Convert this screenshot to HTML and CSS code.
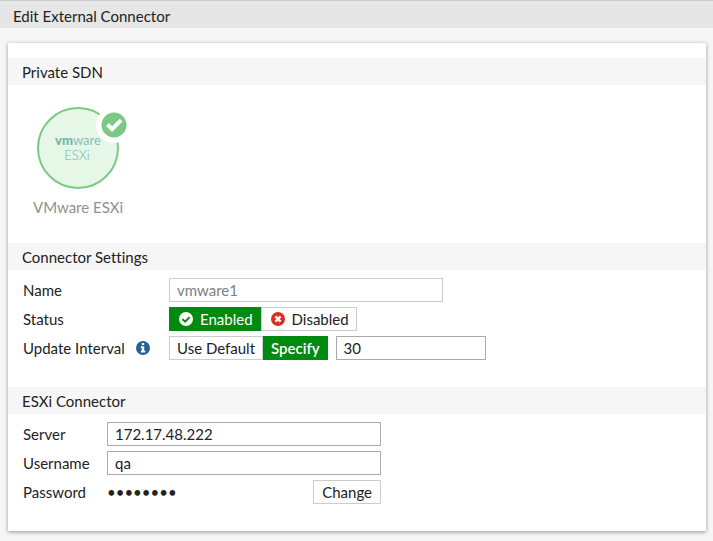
FILE: index.html
```html
<!DOCTYPE html>
<html lang="en">
<head>
  <meta charset="utf-8">
  <meta name="viewport" content="width=device-width, initial-scale=1">
  <title>Edit External Connector</title>
  <link rel="stylesheet" href="styles.css">
</head>
<body>
  <header class="page-header">
    <h1>Edit External Connector</h1>
  </header>
  <main class="card">
    <section>
      <h2 class="section-title">Private SDN</h2>
      <div class="sdn">
        <figure class="connector">
          <div class="disc">
            <svg viewBox="0 0 82 82" aria-hidden="true">
              <circle cx="41" cy="41" r="40" fill="#e6f6e7" stroke="#7cc984" stroke-width="2"/>
              <text class="logo-name" x="41" y="38" text-anchor="middle"><tspan class="logo-bold">vm</tspan>ware</text>
              <text class="logo-product" x="40" y="53" text-anchor="middle">ESXi</text>
            </svg>
            <svg class="badge" viewBox="0 0 36 36" aria-hidden="true">
              <circle cx="18" cy="18" r="18" fill="#fff"/>
              <circle cx="18" cy="18" r="12.5" fill="#7cc984"/>
              <path d="M11.5 17.5l4.6 4.6 9-9" fill="none" stroke="#fff" stroke-width="4"/>
            </svg>
          </div>
          <figcaption>VMware ESXi</figcaption>
        </figure>
      </div>
    </section>

    <section>
      <h2 class="section-title">Connector Settings</h2>
      <form class="fields fields-wide">
        <label for="name">Name</label>
        <input class="text-box" id="name" type="text" value="vmware1" disabled>

        <span id="status-label">Status</span>
        <div class="toggle" role="group" aria-labelledby="status-label">
          <button class="btn active" type="button" aria-pressed="true">
            <svg class="icon" viewBox="0 0 14 14" aria-hidden="true">
              <circle cx="7" cy="7" r="7" fill="#fff"/>
              <path d="M3.5 7.1l2.6 2.6 4.5-4.6" fill="none" stroke="#008a10" stroke-width="2"/>
            </svg>
            Enabled
          </button>
          <button class="btn" type="button" aria-pressed="false">
            <svg class="icon" viewBox="0 0 14 14" aria-hidden="true">
              <circle cx="7" cy="7" r="7" fill="#de2a20"/>
              <path d="M4.4 4.4l5.2 5.2M9.6 4.4l-5.2 5.2" fill="none" stroke="#fff" stroke-width="2.4"/>
            </svg>
            Disabled
          </button>
        </div>

        <label class="with-info" for="interval">Update Interval
          <svg class="icon" viewBox="0 0 14 14" aria-hidden="true">
            <circle cx="7" cy="7" r="7" fill="#266196"/>
            <path d="M5.8 2h2.4v2H5.8zM4.8 5.2h3.4v4.6h1.1v1.7H4.8V9.8h1V6.9h-1z" fill="#fff"/>
          </svg>
        </label>
        <div class="interval">
          <div class="toggle" role="group" aria-label="Update Interval">
            <button class="btn" type="button" aria-pressed="false">Use Default</button>
            <button class="btn active strong" type="button" aria-pressed="true">Specify</button>
          </div>
          <input class="text-box short" id="interval" type="text" value="30">
        </div>
      </form>
    </section>

    <section>
      <h2 class="section-title">ESXi Connector</h2>
      <form class="fields">
        <label for="server">Server</label>
        <input class="text-box" id="server" type="text" value="172.17.48.222">

        <label for="username">Username</label>
        <input class="text-box" id="username" type="text" value="qa">

        <span>Password</span>
        <div class="password">
          <span>••••••••</span>
          <button class="btn" type="button">Change</button>
        </div>
      </form>
    </section>
  </main>
</body>
</html>
```
FILE: styles.css
```css
* {
  box-sizing: border-box;
}

body {
  margin: 0;
  background: #f6f6f6;
  color: #222;
  font: 15px/24px Lato, "Liberation Sans", sans-serif;
  font-variant-ligatures: none;
}

h1,
h2,
figure {
  margin: 0;
  font-size: 15px;
  font-weight: 400;
}

.page-header {
  padding: 3px 13px 0;
  border-top: 1px solid #ccc;
  background: #e6e6e6;
}

.card {
  margin: 15px 7px 10px 8px;
  padding: 15px 0 0;
  background: #fff;
  box-shadow: 0 1px 4px rgba(0, 0, 0, 0.4);
}

.section-title {
  padding: 2px 14px 1px;
  background: #f6f6f6;
}

.sdn {
  display: flex;
  padding: 22px 25px 24px;
}

.connector {
  display: flex;
  flex-direction: column;
  align-items: center;
  gap: 6px;
  color: #909090;
}

.disc {
  position: relative;
  width: 82px;
  height: 82px;
}

.disc svg {
  display: block;
}

.badge {
  position: absolute;
  top: 0;
  right: -13px;
  width: 36px;
  height: 36px;
}

.logo-name {
  fill: #84c1b8;
  font-size: 13px;
}

.logo-bold {
  fill: #70b5ae;
  font-weight: 900;
}

.logo-product {
  fill: #70b5ae;
  font-size: 13px;
  font-weight: 300;
}

.fields {
  display: grid;
  grid-template-columns: 84px minmax(0, 274px);
  row-gap: 5px;
  padding: 8px 15px 27px;
}

.fields-wide {
  grid-template-columns: 146px minmax(0, 1fr);
}

.text-box,
.btn {
  height: 24px;
  margin: 0;
  border: 1px solid #ccc;
  border-radius: 0;
  background: #fff;
  color: #222;
  font: inherit;
  line-height: 22px;
}

.text-box {
  width: 100%;
  max-width: 274px;
  padding: 0 7px;
  border-color: #aaa;
}

.text-box:disabled {
  border-color: #ccc;
  color: #808080;
}

.short {
  width: 150px;
}

.toggle {
  display: flex;
}

.btn {
  display: flex;
  align-items: center;
  gap: 7px;
  padding: 0 8px;
}

.toggle .btn {
  padding: 0 7px;
}

.btn.active {
  border-color: #008a10;
  background: #008a10;
  color: #fff;
}

.strong {
  font-weight: 600;
}

.icon {
  flex: none;
  width: 14px;
  height: 14px;
}

.btn .icon {
  margin-left: 2px;
}

.with-info {
  display: flex;
  align-items: center;
  gap: 11px;
}

.interval {
  display: flex;
  gap: 8px;
}

.password {
  display: flex;
  justify-content: space-between;
}
```
